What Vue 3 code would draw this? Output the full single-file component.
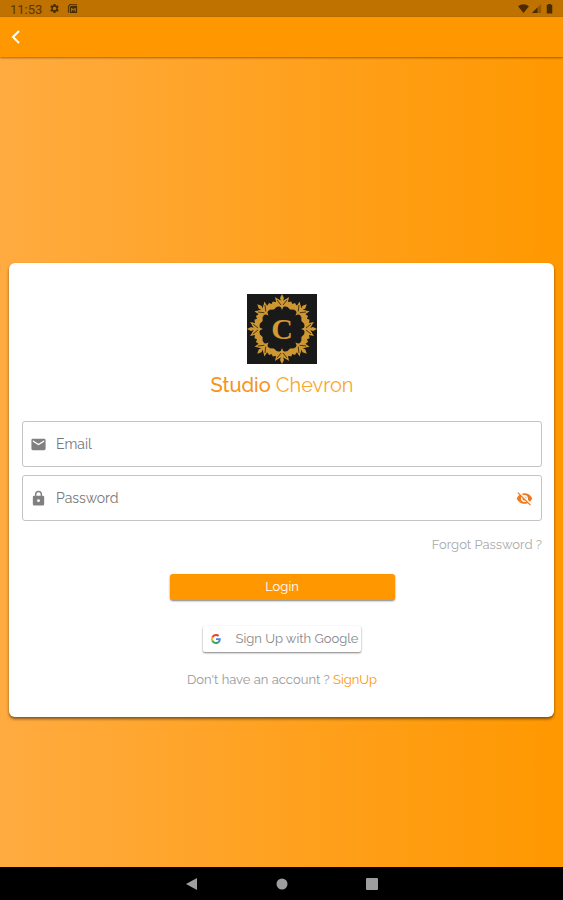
<template>
    <div class="screen">
        <div class="statusBar">
            <div class="statusGroup">
                <span class="clock">11:53</span>
                <svg class="statusIcon gear" viewBox="0 0 24 24">
                    <path fill-rule="evenodd" d="M10 2h4l.6 3 1.7 1 2.900-1 2 3.500-2.300 2v3l2.300 2-2 3.500-2.900-1-1.700 1-.6 3h-4l-.6-3-1.700-1-2.900 1-2-3.500 2.300-2v-3l-2.300-2 2-3.500 2.900 1 1.700-1zM12 8a4 4 0 1 0 0 8 4 4 0 0 0 0-8z" />
                </svg>
                <svg class="statusIcon" viewBox="0 0 24 24">
                    <path d="M6 2h16v2H8L4 8v13H2V7z" />
                    <path fill-rule="evenodd" d="M9 6h13v16H6V9zM9 11v8h2v-5l3 3 3-3v5h2v-8h-2l-3 3-3-3z" />
                </svg>
            </div>
            <div class="statusGroup right">
                <svg class="statusIcon wifi" viewBox="0 0 24 24"><path d="M12 22 0 7c7-6 17-6 24 0z" /></svg>
                <svg class="statusIcon signal" viewBox="0 0 24 24">
                    <path opacity=".35" d="M2 22 22 2v20z" />
                    <path d="M2 22 14 10v12z" />
                </svg>
                <svg class="statusIcon" viewBox="0 0 24 24"><path d="M9 2h6v2h3v19H6V4h3z" /></svg>
            </div>
        </div>

        <header class="appBar">
            <button class="back" type="button" aria-label="Back">
                <svg viewBox="0 0 12 16"><path d="M9 2 3 8l6 6" /></svg>
            </button>
        </header>

        <main>
            <form class="card" @submit.prevent>
                <svg class="logo" viewBox="-35 -35 70 70">
                    <rect x="-35" y="-35" width="70" height="70" fill="#191919" />
                    <!-- curved bands between the eight points of the wreath -->
                    <g v-for="n in 8" :key="'band' + n" :transform="`rotate(${n * 45 + 22.5})`">
                        <path class="gold" d="M-11-25-8-29-5-27-2-29 0-27 2-29 5-27 8-29 11-25 8-20 5-23 0-21-5-23-8-20z" />
                        <path class="vein" d="M-8-25l6-1M2-26l6 1" />
                    </g>
                    <!-- points with a leaf on either side -->
                    <g v-for="n in 8" :key="'point' + n" :transform="`rotate(${n * 45})`">
                        <path class="gold" d="M0-35 2-31 1-28 7-32 6-27 10-25 4-22 2-24 0-19-2-24-4-22-10-25-6-27-7-32-1-28-2-31z" />
                        <path class="vein" d="M-1-24-5-29M1-24l4-5" />
                    </g>
                    <text y="10" text-anchor="middle">C</text>
                </svg>

                <h1><b>Studio</b> Chevron</h1>

                <div class="field">
                    <svg class="fieldIcon" viewBox="0 0 24 24">
                        <path d="M20 4H4a2 2 0 0 0-2 2v12a2 2 0 0 0 2 2h16a2 2 0 0 0 2-2V6a2 2 0 0 0-2-2zm0 4-8 5-8-5V6l8 5 8-5z" />
                    </svg>
                    <div class="entry">
                        <label v-if="!email" for="email">Email</label>
                        <input id="email" v-model="email" type="email">
                    </div>
                </div>

                <div class="field">
                    <svg class="fieldIcon" viewBox="0 0 24 24">
                        <path d="M18 8h-1V6A5 5 0 0 0 7 6v2H6a2 2 0 0 0-2 2v10a2 2 0 0 0 2 2h12a2 2 0 0 0 2-2V10a2 2 0 0 0-2-2zm-6 9a2 2 0 1 1 0-4 2 2 0 0 1 0 4zm3-9H9V6a3 3 0 0 1 6 0z" />
                    </svg>
                    <div class="entry">
                        <label v-if="!password" for="password">Password</label>
                        <input id="password" v-model="password" :type="visible ? 'text' : 'password'">
                    </div>
                    <button class="eye" type="button" aria-label="Show password" @click="visible = !visible">
                        <svg viewBox="0 0 24 24">
                            <path d="M12 7c2.760 0 5 2.240 5 5 0 .65-.13 1.260-.36 1.830l2.920 2.920c1.510-1.260 2.700-2.890 3.430-4.750-1.730-4.390-6-7.500-11-7.500-1.400 0-2.740.25-3.980.7l2.160 2.160C10.740 7.130 11.350 7 12 7zM2 4.270l2.740 2.740A11.800 11.800 0 0 0 1 12c1.730 4.390 6 7.500 11 7.500 1.550 0 3.030-.3 4.380-.84L19.730 22 21 20.730 3.270 3zM7.530 9.800l1.550 1.550c-.05.21-.08.43-.08.65 0 1.660 1.340 3 3 3 .22 0 .44-.03.65-.08l1.550 1.550c-.67.33-1.410.53-2.200.53-2.760 0-5-2.240-5-5 0-.79.2-1.530.53-2.200zm4.310-.78 3.150 3.150.02-.16c0-1.660-1.340-3-3-3z" />
                        </svg>
                    </button>
                </div>

                <a class="forgot" href="#">Forgot Password ?</a>

                <button class="login" type="submit">Login</button>

                <button class="google" type="button">
                    <svg viewBox="0 0 48 48">
                        <path fill="#ea4335" d="M24 9.500c3.500 0 6.700 1.200 9.200 3.600l6.900-6.900C35.900 2.400 30.500 0 24 0 14.600 0 6.500 5.400 2.600 13.200l8 6.200C12.400 13.700 17.700 9.500 24 9.500z" />
                        <path fill="#4285f4" d="M47 24.500c0-1.600-.2-3.100-.4-4.500H24v9h12.900c-.6 3-2.300 5.500-4.700 7.200l7.700 6C44.400 38 47 31.800 47 24.500z" />
                        <path fill="#fbbc05" d="M10.500 28.600a14 14 0 0 1 0-9.200l-7.900-6.200a24 24 0 0 0 0 21.600z" />
                        <path fill="#34a853" d="M24 48c6.500 0 11.900-2.100 15.900-5.800l-7.700-6c-2.200 1.500-5 2.300-8.200 2.300-6.300 0-11.600-4.200-13.500-9.900l-7.900 6.200C6.500 42.600 14.600 48 24 48z" />
                    </svg>
                    Sign Up with Google
                </button>

                <p class="signup">Don't have an account ? <a href="#">SignUp</a></p>
            </form>
        </main>

        <nav class="navBar">
            <button type="button" aria-label="Back">
                <svg viewBox="0 0 12 12"><path d="M11 0v12L0 6z" /></svg>
            </button>
            <button type="button" aria-label="Home">
                <svg viewBox="0 0 12 12"><circle cx="6" cy="6" r="5.500" /></svg>
            </button>
            <button type="button" aria-label="Recent apps">
                <svg viewBox="0 0 12 12"><rect width="12" height="12" rx="1" /></svg>
            </button>
        </nav>
    </div>
</template>

<script setup>
import { ref } from "vue";

const email = ref("");
const password = ref("");
const visible = ref(false);
</script>

<style>
 body {
     margin: 0;
 }
</style>

<style scoped>
 .screen {
     --orange: #ff9800;
     min-height: 100vh;
     display: flex;
     flex-direction: column;
     font-family: Raleway, Lato, "Open Sans", sans-serif;
     font-size: 13px;
     line-height: 18px;
     color: #999;
 }

 button {
     font: inherit;
     border: none;
     padding: 0;
     background: none;
     cursor: pointer;
 }

 a {
     color: inherit;
     text-decoration: none;
 }

 svg {
     display: block;
 }

 .statusBar {
     display: flex;
     justify-content: space-between;
     height: 17px;
     padding: 0 8px 0 10px;
     background: #bf7200;
     color: #5a3600;
     font-family: Roboto, sans-serif;
     font-size: 13px;
 }

 .statusGroup {
     display: flex;
     align-items: center;
     gap: 7px;
 }

 .statusGroup.right {
     gap: 2px;
 }

 .clock {
     padding-top: 2px;
 }

 .statusIcon {
     width: 11px;
     height: 11px;
     fill: #4a2c00;
 }

 .appBar {
     display: flex;
     align-items: center;
     height: 40px;
     padding: 0 10px;
     background: var(--orange);
     box-shadow: 0 1px 2px rgba(0, 0, 0, 0.4);
     z-index: 1;
 }

 .back svg {
     width: 12px;
     height: 16px;
     fill: none;
     stroke: white;
     stroke-width: 2;
 }

 main {
     flex: 1;
     display: flex;
     flex-direction: column;
     justify-content: center;
     padding: 56px 9px 0;
     background: linear-gradient(to right, #ffab40, var(--orange));
 }

 .card {
     display: flex;
     flex-direction: column;
     align-items: center;
     padding: 31px 12px 28px 13px;
     background: white;
     border-radius: 6px;
     box-shadow: 0 2px 3px rgba(0, 0, 0, 0.5);
 }

 .logo {
     width: 70px;
     height: 70px;
 }

 .logo text {
     font: bold 30px "Liberation Serif", serif;
     fill: #d19a35;
 }

 .gold {
     fill: #cd9733;
 }

 .vein {
     fill: none;
     stroke: #4b371a;
     stroke-width: 1;
 }

 h1 {
     margin: 8px 0 23px;
     font-size: 20px;
     line-height: 26px;
     font-weight: 400;
     color: #f9a72e;
 }

 h1 b {
     font-weight: 500;
     color: #f6931a;
 }

 .field {
     display: flex;
     align-items: center;
     gap: 9px;
     width: 100%;
     height: 46px;
     box-sizing: border-box;
     padding: 0 8px 0 7px;
     border: 1px solid #c4c4c4;
     border-radius: 3px;
 }

 .field + .field {
     margin-top: 8px;
 }

 .fieldIcon {
     width: 17px;
     height: 17px;
     fill: #808080;
 }

 .entry {
     flex: 1;
     position: relative;
     font-size: 14px;
     color: #777;
 }

 .entry label {
     position: absolute;
     inset: 0;
     display: flex;
     align-items: center;
     cursor: text;
 }

 .entry input {
     display: block;
     width: 100%;
     height: 40px;
     padding: 0;
     border: none;
     outline: none;
     background: none;
     font: inherit;
     color: inherit;
 }

 .eye svg {
     width: 17px;
     height: 17px;
     fill: #ee7b21;
 }

 .forgot {
     align-self: flex-end;
     margin: 15px 0 20px;
     color: #aaa;
 }

 .login {
     width: 100%;
     max-width: 225px;
     height: 26px;
     border-radius: 3px;
     background: var(--orange);
     box-shadow: 0 1px 2px rgba(0, 0, 0, 0.5);
     color: white;
 }

 .google {
     display: flex;
     align-items: center;
     gap: 14px;
     height: 26px;
     margin: 26px 0 19px;
     padding: 0 2px 0 8px;
     border-radius: 2px;
     background: white;
     box-shadow: 0 1px 2px rgba(0, 0, 0, 0.5);
     color: #888;
 }

 .google svg {
     width: 10px;
     height: 10px;
 }

 .signup {
     margin: 0;
 }

 .signup a {
     color: var(--orange);
 }

 .navBar {
     display: flex;
     justify-content: center;
     gap: 78px;
     height: 33px;
     background: black;
 }

 .navBar svg {
     width: 12px;
     height: 12px;
     fill: #9e9e9e;
 }
</style>
